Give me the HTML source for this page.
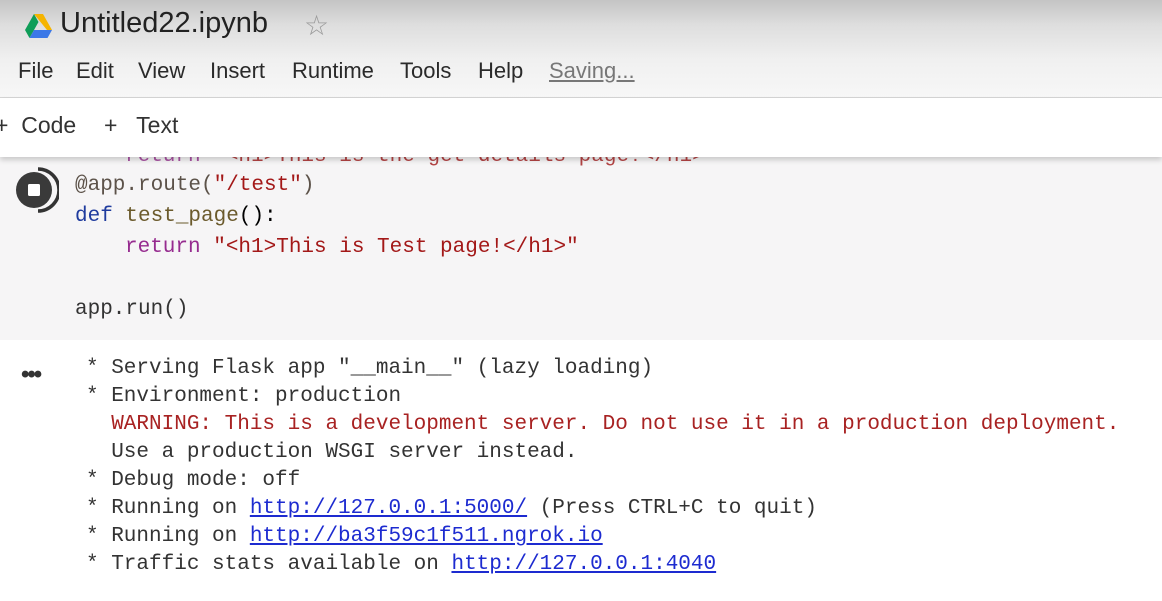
<!DOCTYPE html>
<html><head><meta charset="utf-8"><style>
*{margin:0;padding:0;box-sizing:border-box}
body{width:1162px;height:601px;overflow:hidden;position:relative;background:#fff;font-family:"Liberation Sans",sans-serif}
.hdr{position:absolute;left:0;top:0;width:1162px;height:98px;background:linear-gradient(#c4c4c4 0px,#dedede 25px,#f0f0f0 60px,#f7f7f7 97px);border-bottom:1px solid #d6d6d6}
.title{position:absolute;left:60px;top:7px;font-size:29px;color:#222;letter-spacing:0px}
.star{position:absolute;left:304px;top:9px;font-size:28px;color:#9a9a9a}
.menu{position:absolute;top:58px;font-size:22px;color:#2a2a2a}
.tb{position:absolute;left:0;top:98px;width:1162px;height:59px;background:#fff;box-shadow:0 3px 5px rgba(0,0,0,.18);z-index:2}
.tb span{position:absolute;top:14px;font-size:23px;color:#333}
.cell{position:absolute;left:0;top:150px;width:1162px;height:190px;background:#f6f5f6}
.mono{font-family:"Liberation Mono",monospace;font-size:21px;white-space:pre;position:absolute}
.c{color:#5c5249}.k{color:#1f3b9e}.f{color:#6b5a2c}.r{color:#962b8f}.s{color:#a31818}
.o{color:#333}.w{color:#a82222}
a{color:#1d2bd0;text-decoration:underline}
</style></head><body>
<div class="hdr">
<svg style="position:absolute;left:25px;top:14px" width="27" height="24" viewBox="0 0 27 24"><polygon points="9,0 18,0 27,16 22,16" fill="#f5b400"/><polygon points="9,0 13.5,8 4.5,24 0,16" fill="#0f9d58"/><polygon points="4.5,24 9,16 27,16 22.5,24" fill="#3b78e7"/></svg>
<div class="title">Untitled22.ipynb</div>
<div class="star">☆</div>
<div class="menu" style="left:18px">File</div>
<div class="menu" style="left:76px">Edit</div>
<div class="menu" style="left:138px">View</div>
<div class="menu" style="left:210px">Insert</div>
<div class="menu" style="left:292px">Runtime</div>
<div class="menu" style="left:400px">Tools</div>
<div class="menu" style="left:478px">Help</div>
<div class="menu" style="left:549px;color:#777;text-decoration:underline">Saving...</div>
</div>
<div class="tb"><span style="left:-5px">+ &nbsp;Code</span><span style="left:104px">+&nbsp;&nbsp; Text</span></div>
<div class="cell">
<div class="mono r" style="left:125px;top:-5px;opacity:.8">return <span class="s">"&lt;h1&gt;This is the get details page!&lt;/h1&gt;"</span></div>
<svg style="position:absolute;left:13px;top:16px" width="46" height="48" viewBox="0 0 46 48"><path d="M25 3 A21 21 0 0 1 25 45" fill="none" stroke="#333" stroke-width="3.5"/><circle cx="21" cy="24" r="18" fill="#3a3a3a"/><rect x="15" y="18" width="12" height="12" rx="1.5" fill="#fff"/></svg>
<div class="mono c" style="left:75px;top:24px">@app.route(<span class="s">"/test"</span>)</div>
<div class="mono" style="left:75px;top:55px"><span class="k">def</span> <span class="f">test_page</span>():</div>
<div class="mono r" style="left:125px;top:86px">return <span class="s">"&lt;h1&gt;This is Test page!&lt;/h1&gt;"</span></div>
<div class="mono" style="left:75px;top:148px;color:#333">app.run()</div>
</div>
<div style="position:absolute;left:21px;top:361px;font-size:24px;color:#333;font-weight:bold;letter-spacing:-2px">•••</div>
<div class="mono o" style="left:86px;top:355px;line-height:28px">* Serving Flask app "__main__" (lazy loading)
* Environment: production
<span class="w">  WARNING: This is a development server. Do not use it in a production deployment.</span>
  Use a production WSGI server instead.
* Debug mode: off
* Running on <a>http://127.0.0.1:5000/</a> (Press CTRL+C to quit)
* Running on <a>http://ba3f59c1f511.ngrok.io</a>
* Traffic stats available on <a>http://127.0.0.1:4040</a></div>
</body></html>
